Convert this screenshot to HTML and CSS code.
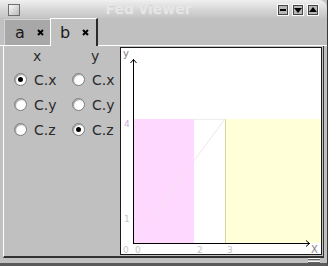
FILE: index.html
```html
<!DOCTYPE html>
<html>
	<head>
		<meta charset="UTF-8">
		<title>Fed viewer</title>
		<link rel="stylesheet" href="styles.css">
	</head>
	<body>
		<div id="window">
			<div class="titlebar">
				<span class="closebox"></span>
				<span class="title">Fed viewer</span>
				<span class="winbuttons">
					<span class="winbtn"><svg width="10" height="10"><rect x="2" y="4" width="6" height="2" fill="#000"/></svg></span>
					<span class="winbtn"><svg width="10" height="10"><polygon points="1,3 9,3 5,8" fill="#000"/></svg></span>
					<span class="winbtn"><svg width="10" height="10"><polygon points="1,7 9,7 5,2" fill="#000"/></svg></span>
				</span>
			</div>
			<div class="tabs">
				<div class="tab">
					<span class="tabname">a</span>
					<svg class="tabclose" width="7" height="7"><path d="M1 1L6 6M6 1L1 6" stroke="#000" stroke-width="2"/></svg>
				</div>
				<div class="tab current">
					<span class="tabname">b</span>
					<svg class="tabclose" width="7" height="7"><path d="M1 1L6 6M6 1L1 6" stroke="#000" stroke-width="2"/></svg>
				</div>
			</div>
			<div class="panel">
				<div class="choices">
					<div class="head">x</div>
					<div class="head">y</div>
					<div class="radio on"><span class="dot"></span>C.x</div>
					<div class="radio"><span class="dot"></span>C.x</div>
					<div class="radio"><span class="dot"></span>C.y</div>
					<div class="radio"><span class="dot"></span>C.y</div>
					<div class="radio"><span class="dot"></span>C.z</div>
					<div class="radio on"><span class="dot"></span>C.z</div>
				</div>
				<div class="plot">
					<svg width="200" height="206">
						<rect x="12" y="71" width="61" height="124" fill="#ffd8ff"/>
						<rect x="104" y="71" width="96" height="124" fill="#ffffd8"/>
						<line x1="73" y1="71.5" x2="104" y2="71.5" stroke="#eeeeee"/>
						<line x1="104.5" y1="71" x2="104.5" y2="195" stroke="#d8d4a8"/>
						<line x1="12" y1="195" x2="104" y2="71" stroke="#f2e4f2"/>
						<!-- axes -->
						<line x1="12.5" y1="11" x2="12.5" y2="195" stroke="#000"/>
						<line x1="12" y1="195.5" x2="189" y2="195.5" stroke="#000"/>
						<path d="M9.5 15L12.5 11.5L15.5 15" fill="none" stroke="#000"/>
						<path d="M185 192.5L188.5 195.5L185 198.5" fill="none" stroke="#000"/>
						<text x="2" y="9" class="axis">y</text>
						<text x="190" y="204.5" class="axis">X</text>
						<text x="3" y="79" class="tick pink">4</text>
						<text x="3" y="174" class="tick">1</text>
						<text x="2" y="205" class="tick">0</text>
						<text x="14" y="205" class="tick">0</text>
						<text x="76" y="205" class="tick">2</text>
						<text x="106" y="205" class="tick">3</text>
					</svg>
				</div>
			</div>
			<div class="statusbar">
				<svg class="grip" width="14" height="5"><path d="M1 0.5H13M1 3.5H13" stroke="#f4f4f4"/><path d="M1 1.5H13M1 4.5H13" stroke="#666"/></svg>
			</div>
		</div>
	</body>
</html>
```
FILE: styles.css
```css
body{
	margin: 0;
	background: #c0c0c0;
	font-family: "DejaVu Sans", sans-serif;
}
#window{
	width: 328px;
	height: 266px;
	box-sizing: border-box;
	background: #c0c0c0;
	border-right: 1px solid #3a3a3a;
	border-bottom: 3px solid #5a5a5a;
	display: flex;
	flex-direction: column;
}

/* title bar */
.titlebar{
	height: 18px;
	display: flex;
	align-items: center;
	background: linear-gradient(#f0f0f0, #d4d4d4 60%, #c4c4c4);
	border-top-right-radius: 8px;
}
.closebox{
	width: 10px;
	height: 10px;
	margin-left: 8px;
	margin-top: 2px;
	border: 1px solid #6e6e6e;
	background: linear-gradient(135deg, #fafafa, #b8b8b8);
}
.title{
	flex: 1;
	text-align: center;
	font-weight: bold;
	font-size: 14px;
	color: #e6e6e6;
	text-shadow: 0 1px 0 #d0d0d0;
}
.winbuttons{
	display: flex;
	gap: 3px;
	margin-right: 8px;
	margin-top: 2px;
}
.winbtn{
	width: 10px;
	height: 10px;
	border: 1px solid #fafafa;
	box-shadow: inset 0 0 0 1px #444;
	background: #b8b8b8;
	display: flex;
}

/* tabs */
.tabs{
	height: 28px;
	box-sizing: border-box;
	display: flex;
	align-items: flex-end;
	padding-left: 4px;
	border-bottom: 1px solid #fff;
}
.tab{
	width: 46px;
	height: 26px;
	box-sizing: border-box;
	background: #a8a8a8;
	border-top: 1px solid #d4d4d4;
	border-left: 1px solid #d4d4d4;
	display: flex;
	align-items: center;
	font-size: 16px;
	color: #1a1a1a;
}
.tab .tabname{
	width: 22px;
	padding-left: 10px;
}
.tab.current{
	width: 48px;
	height: 28px;
	margin-bottom: -1px;
	background: #c0c0c0;
	border-top: 1px solid #fff;
	border-left: 1px solid #fff;
	border-right: 2px solid #2a2a2a;
}
.tab.current .tabname{
	padding-left: 9px;
}

/* panel */
.panel{
	display: flex;
	margin-left: 3px;
	padding: 1px 2px 1px 0;
	border-left: 1px solid #fff;
	border-right: 1px solid #333;
	border-bottom: 2px solid #333;
	width: 321px;
	box-sizing: border-box;
}
.choices{
	width: 116px;
	padding: 1px 0 0 10px;
	box-sizing: border-box;
	display: grid;
	grid-template-columns: 58px 48px;
	grid-auto-rows: 25px;
	grid-template-rows: 19px;
	align-content: start;
	font-size: 14px;
	color: #2a2a2a;
}
.head{
	padding-left: 19px;
	line-height: 17px;
}
.radio{
	display: flex;
	align-items: center;
	gap: 7px;
}
.dot{
	width: 11px;
	height: 11px;
	border-radius: 50%;
	border: 1px solid #7c7c7c;
	background: #fff;
	box-shadow: inset 1px 1px 1px #9a9a9a;
	display: flex;
	align-items: center;
	justify-content: center;
}
.radio.on .dot::after{
	content: "";
	width: 5px;
	height: 5px;
	border-radius: 50%;
	background: #000;
}
.plot{
	width: 202px;
	height: 208px;
	box-sizing: border-box;
	border: 1px solid #1a1a1a;
	background: #fff;
}
.plot svg{
	display: block;
}
.axis{
	font-family: "DejaVu Sans", sans-serif;
	font-size: 10px;
	fill: #808080;
}
.tick{
	font-family: "DejaVu Sans", sans-serif;
	font-size: 9px;
	fill: #c4c4c4;
}
.tick.pink{
	fill: #c8b0dc;
}

/* bottom */
.statusbar{
	flex: 1;
	display: flex;
	justify-content: flex-end;
	align-items: flex-start;
}
.grip{
	margin-right: 6px;
}
```
